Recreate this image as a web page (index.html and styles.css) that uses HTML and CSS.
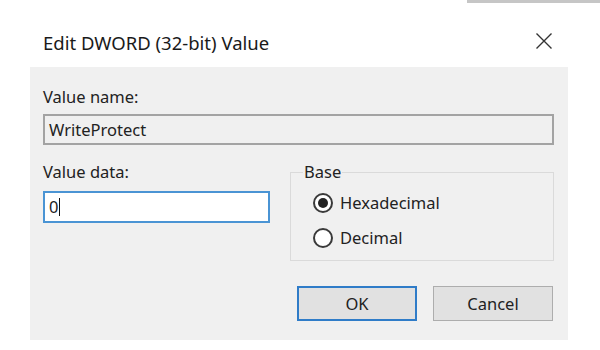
FILE: index.html
```html
<!DOCTYPE html>
<html>
  <head>
    <link rel="stylesheet" href="styles.css">
  </head>
  <body>
    <div class="strip"><div class="strip-bar"></div></div>
    <div class="dialog">
      <div class="titlebar">
        <span class="title">Edit DWORD (32-bit) Value</span>
        <svg class="close" width="18" height="18" viewBox="0 0 18 18">
          <path d="M1.5 1.5 L16.5 16.5 M16.5 1.5 L1.5 16.5" stroke="#333" stroke-width="1.4" fill="none"/>
        </svg>
      </div>
      <div class="panel">
        <div class="label">Value name:</div>
        <div class="field field-disabled">WriteProtect</div>
        <div class="row">
          <div class="col">
            <div class="label">Value data:</div>
            <div class="field field-focus">0<span class="caret"></span></div>
          </div>
          <fieldset class="group">
            <legend>Base</legend>
            <div class="radio">
              <span class="dot checked"></span>
              <span>Hexadecimal</span>
            </div>
            <div class="radio">
              <span class="dot"></span>
              <span>Decimal</span>
            </div>
          </fieldset>
        </div>
        <div class="buttons">
          <div class="btn btn-default">OK</div>
          <div class="btn">Cancel</div>
        </div>
      </div>
    </div>
  </body>
</html>
```

FILE: styles.css
```css
body {
  margin: 0;
  background: #fff;
  font-family: "Noto Sans", sans-serif;
  color: #222;
}
.strip {
  display: flex;
  justify-content: flex-end;
  height: 3px;
}
.strip-bar {
  width: 133px;
  background: #c6c6c6;
}
.dialog {
  width: 538px;
  margin-left: 30px;
}
.titlebar {
  height: 64px;
  box-sizing: border-box;
  padding: 16px 15px 0 13px;
  display: flex;
  justify-content: space-between;
  align-items: center;
}
.title {
  font-size: 18.5px;
  line-height: 24px;
  color: #1a1a1a;
}
.close {
  margin-bottom: 4px;
}
.panel {
  background: #f0f0f0;
  height: 273px;
  box-sizing: border-box;
  padding: 20px 14px 0 13px;
}
.label {
  font-size: 16.5px;
  line-height: 20px;
}
.field {
  box-sizing: border-box;
  font-size: 16.5px;
  line-height: 20px;
  padding: 0 4px;
  display: flex;
  align-items: center;
}
.field-disabled {
  margin-top: 7px;
  height: 31px;
  border: 2px solid #a3a3a3;
  background: #f0f0f0;
}
.field-focus {
  margin-top: 9px;
  height: 32px;
  border: 2px solid #4a94d4;
  background: #fff;
}
.caret {
  display: inline-block;
  width: 1px;
  height: 18px;
  background: #111;
  margin-left: 1px;
}
.row {
  margin-top: 17px;
  display: grid;
  grid-template-columns: 227px 264px;
  gap: 20px;
}
.group {
  margin: 0;
  padding: 3px 0 5px 0;
  border: 1px solid #dadada;
  font-size: 16.5px;
}
.group legend {
  margin-left: 12px;
  padding: 0 1px;
  line-height: 20px;
}
.radio {
  height: 35px;
  display: flex;
  align-items: center;
  gap: 7px;
  padding-left: 22px;
}
.dot {
  width: 20px;
  height: 20px;
  box-sizing: border-box;
  border: 2px solid #3a3a3a;
  border-radius: 50%;
  background: #fff;
  display: flex;
  align-items: center;
  justify-content: center;
}
.dot.checked::after {
  content: "";
  width: 10px;
  height: 10px;
  border-radius: 50%;
  background: #222;
}
.buttons {
  margin-top: 25px;
  display: flex;
  justify-content: flex-end;
  gap: 16px;
  padding-right: 1px;
}
.btn {
  width: 120px;
  height: 35px;
  box-sizing: border-box;
  border: 1px solid #adadad;
  background: #e1e1e1;
  font-size: 16.5px;
  display: flex;
  align-items: center;
  justify-content: center;
}
.btn-default {
  border: 2px solid #2f7cc8;
}
```
